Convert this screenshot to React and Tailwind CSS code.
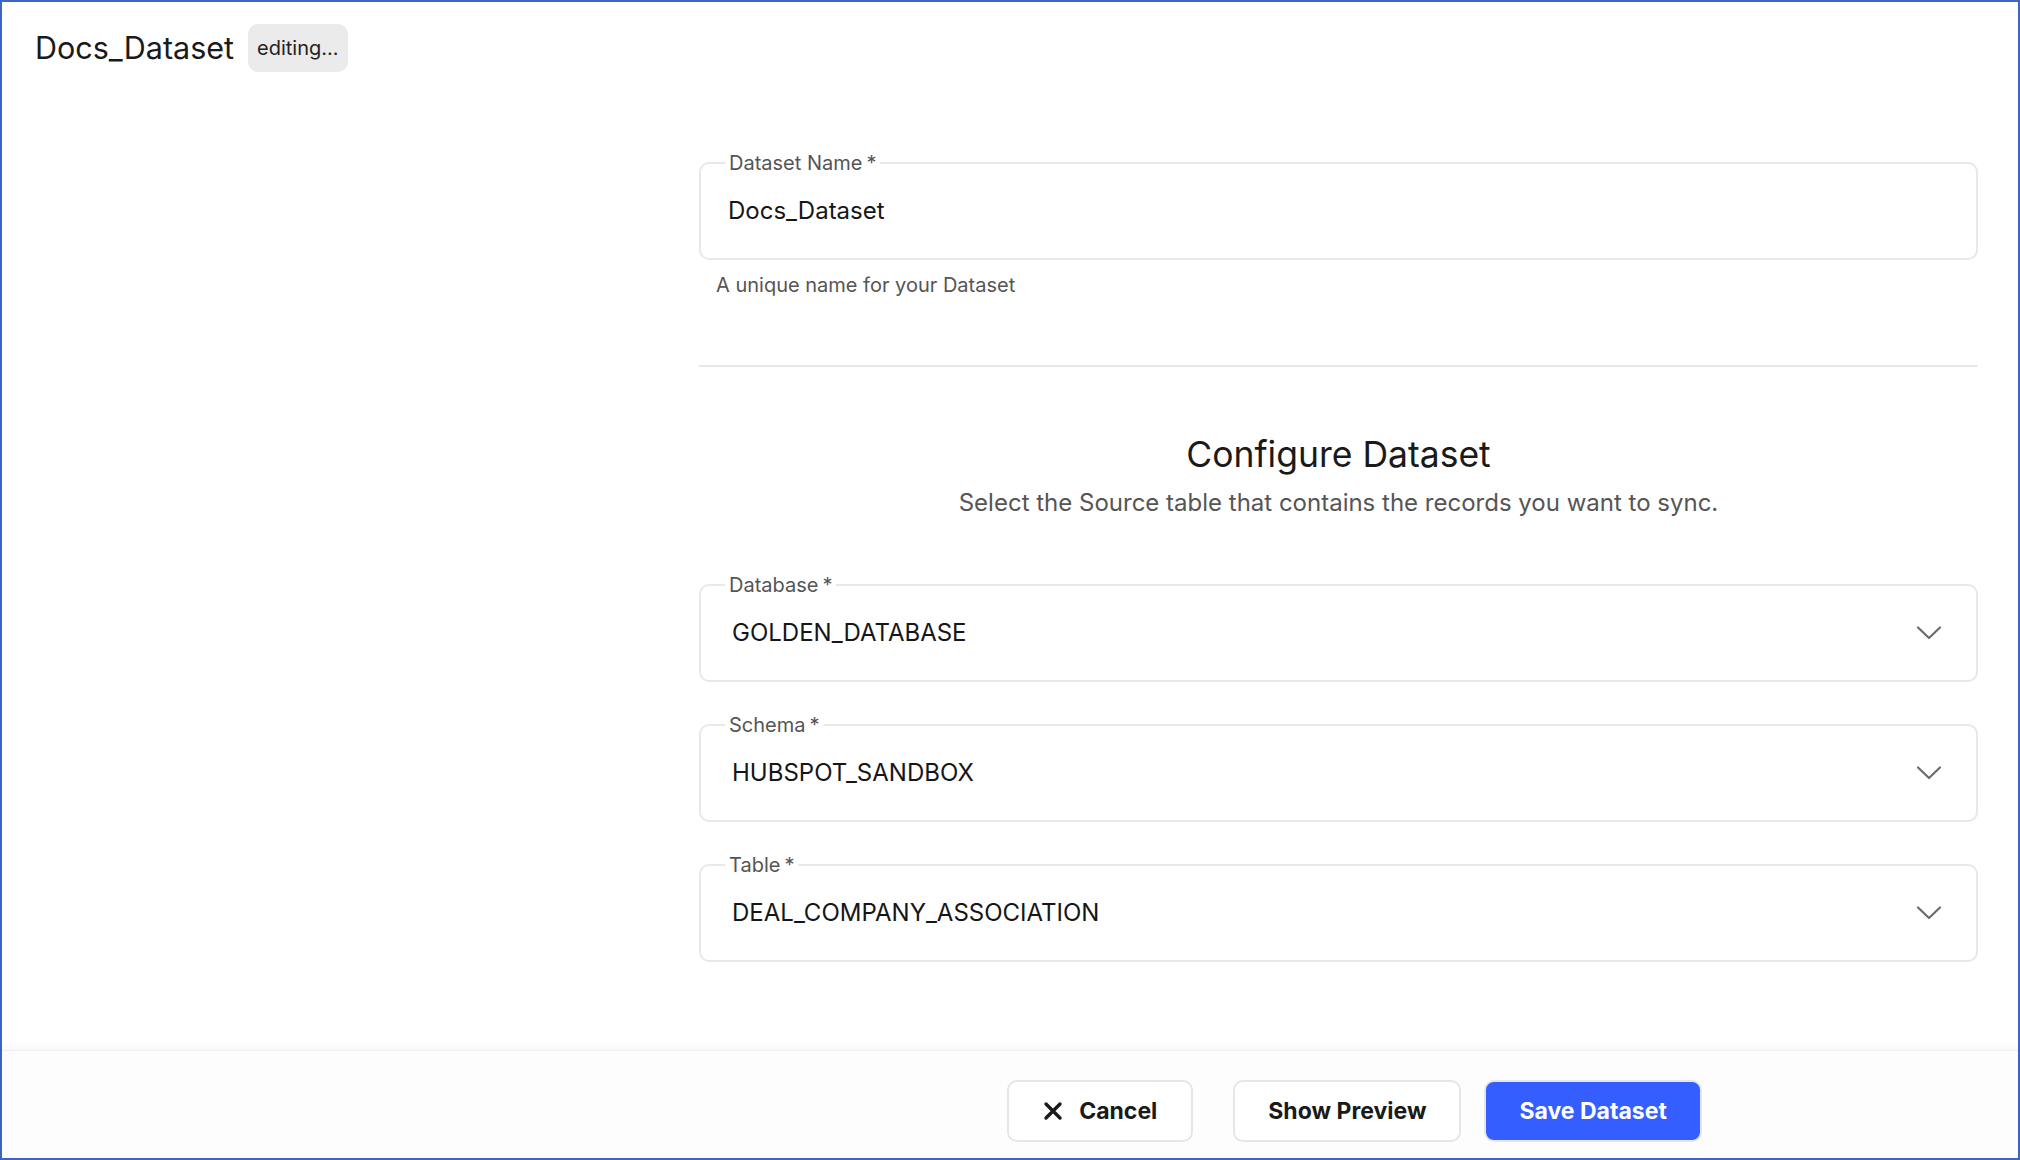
function Chevron() {
  return (
    <svg width="26" height="16" viewBox="0 0 26 16" fill="none" className="mr-[8px] shrink-0">
      <polyline points="2,2.5 13,13 24,2.5" stroke="#6b6b6b" strokeWidth="2.2" strokeLinecap="round" strokeLinejoin="round" />
    </svg>
  );
}

function CloseIcon() {
  return (
    <svg width="20" height="20" viewBox="0 0 20 20" fill="none" className="shrink-0">
      <path d="M3 3 17 17M17 3 3 17" stroke="#1a1a1a" strokeWidth="3.4" strokeLinecap="round" />
    </svg>
  );
}

function Field({ label, value, select, className = '' }) {
  return (
    <fieldset className={`border-2 border-[#e8e8e8] rounded-[10px] pl-[27px] pr-[26px] pt-[22px] pb-[33px] ${className}`}>
      <legend className="px-[4px] -ml-[3px] text-[20px] leading-[24px] text-[#555555]">
        {label}<span className="ml-[4px]">*</span>
      </legend>
      <div className="flex items-center justify-between h-[28px]">
        <span className={`text-[24px] leading-[28px] text-[#161616] ${select ? 'pl-[4px]' : ''}`}>{value}</span>
        {select && <Chevron />}
      </div>
    </fieldset>
  );
}

export default function App() {
  return (
    <div className="h-[1160px] w-full border-2 border-[#3a67c4] bg-white flex flex-col font-['Inter','Liberation_Sans',sans-serif] text-[#161616]">
      {/* Header */}
      <header className="flex items-center gap-[14px] px-[33px] pt-[22px]">
        <h1 className="text-[30.5px] leading-[40px] text-[#1a1a1a]">Docs_Dataset</h1>
        <span className="bg-[#ebebeb] rounded-[10px] h-[48px] px-[9px] flex items-center text-[20px] text-[#222222]">
          editing...
        </span>
      </header>

      {/* Body */}
      <main className="flex-1 flex">
        <aside className="w-[697px] shrink-0"></aside>
        <section className="flex-1 pr-[40px] pt-[79px]">
          <Field label="Dataset Name" value="Docs_Dataset" />
          <p className="mt-[13px] pl-[17px] text-[20px] leading-[24px] text-[#555555]">
            A unique name for your Dataset
          </p>

          <div className="mt-[68px] h-[2px] bg-[#e8e8e8]"></div>

          <div className="text-center">
            <h2 className="mt-[66px] text-[35.5px] leading-[44px] text-[#1a1a1a]">Configure Dataset</h2>
            <p className="mt-[12px] text-[24px] leading-[28px] text-[#555555]">
              Select the Source table that contains the records you want to sync.
            </p>
          </div>

          <Field className="mt-[56px]" label="Database" value="GOLDEN_DATABASE" select />
          <Field className="mt-[31px]" label="Schema" value="HUBSPOT_SANDBOX" select />
          <Field className="mt-[31px]" label="Table" value="DEAL_COMPANY_ASSOCIATION" select />
        </section>
      </main>

      {/* Footer */}
      <footer className="h-[108px] shrink-0 flex bg-[#fdfdfd] border-t border-[#efefef] shadow-[0_-3px_6px_rgba(0,0,0,0.04)]">
        <aside className="w-[697px] shrink-0"></aside>
        <div className="flex-1 pr-[40px] pl-[32px] pt-[29px] flex justify-center items-start">
          <button className="h-[62px] px-[34px] flex items-center gap-[16px] border-2 border-[#e6e6e6] rounded-[10px] bg-white text-[23px] font-bold text-[#1a1a1a]">
            <CloseIcon />
            Cancel
          </button>
          <button className="ml-[40px] h-[62px] px-[33px] border-2 border-[#e6e6e6] rounded-[10px] bg-white text-[23px] font-bold text-[#1a1a1a]">
            Show Preview
          </button>
          <button className="ml-[23px] h-[62px] px-[33px] border-2 border-[#e6e6e6] rounded-[10px] bg-[#345eff] text-[23px] font-bold text-white">
            Save Dataset
          </button>
        </div>
      </footer>
    </div>
  );
}
